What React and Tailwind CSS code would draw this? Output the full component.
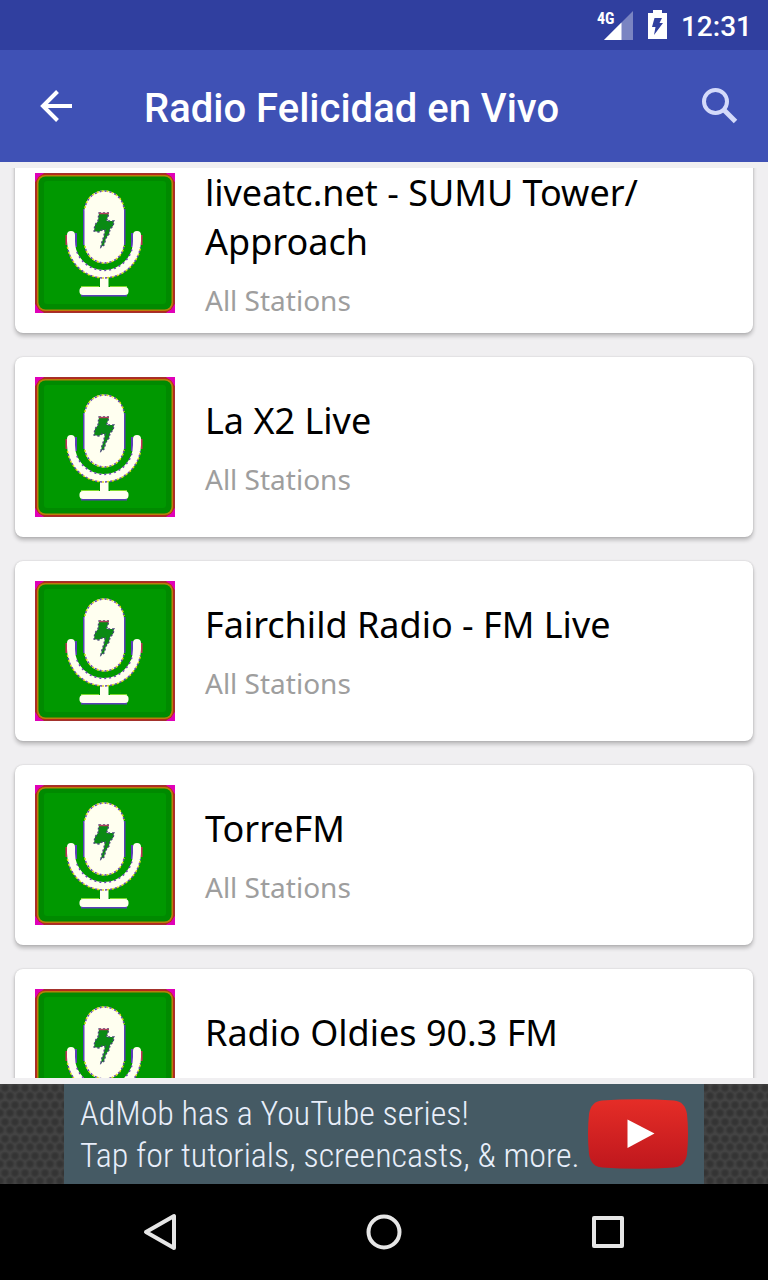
import React from "react";

const stations = [
  { id: 1, name: ["liveatc.net - SUMU Tower/", "Approach"], category: "All Stations" },
  { id: 2, name: ["La X2 Live"], category: "All Stations" },
  { id: 3, name: ["Fairchild Radio - FM Live"], category: "All Stations" },
  { id: 4, name: ["TorreFM"], category: "All Stations" },
  { id: 5, name: ["Radio Oldies 90.3 FM"], category: "" },
];

const MicLogo = () => (
  <svg viewBox="0 0 140 140" className="size-35 shrink-0" aria-hidden="true">
    <rect width="140" height="140" fill="#a3322c" />
    {/* corners */}
    <path
      d="M0 0h9L0 9zM140 0v9l-9-9zM0 140v-9l9 9zM140 140h-9l9-9z"
      fill="#e000b8"
    />
    <rect x="1" y="1" width="138" height="138" rx="9" fill="#b8281c" />
    <rect x="2" y="2" width="136" height="136" rx="8" fill="#b5800a" />
    <rect x="3.500" y="3.500" width="133" height="133" rx="7" fill="#008a00" />
    <rect x="9" y="8" width="122" height="123" rx="3" fill="#009800" />

    {/* colour fringe */}
    <g fill="none" stroke="#5a3fb8" strokeWidth="2">
      <path d="M49 36v36M89.500 36v36M41 60v14M97 60v14M46 122.500h46" />
    </g>
    <path d="M31.500 62v10M106.500 62v10" stroke="#c2305a" strokeWidth="2" />
    <path d="M46 114h18M75 114h17" stroke="#a8f03c" strokeWidth="1.500" />

    <rect x="49.500" y="17.500" width="39.500" height="73" rx="19.700" fill="#fffff0" />
    <path
      d="M36 62v6a33 33 0 0 0 66 0v-6"
      fill="none"
      stroke="#fffff0"
      strokeWidth="8"
      strokeLinecap="round"
    />
    <path d="M65 100h8.500v16H65z" fill="#fffff0" />
    <rect x="44.500" y="114" width="49" height="8" rx="3.500" fill="#fffff0" />

    {/* stepped edges */}
    <g fill="none" strokeWidth="1.500" strokeDasharray="2 3">
      <g stroke="#e0d820">
        <path d="M50 35a19.700 19.700 0 0 1 39 0M50 73a19.700 19.700 0 0 0 39 0" />
        <path d="M32.500 74a37 37 0 0 0 73 0" />
      </g>
      <g stroke="#6a4bb0" strokeDashoffset="2">
        <path d="M50 35a19.700 19.700 0 0 1 39 0M50 73a19.700 19.700 0 0 0 39 0" />
        <path d="M32.500 74a37 37 0 0 0 73 0" />
        <path d="M41 76a29 29 0 0 0 56 0" />
      </g>
    </g>
    <path
      d="M64 40h10l-2.500 8H79l-1 5-3 3-1 5-3 4-2 7-3 2 1-5 2-6 1-6h-3l-3 2-5-1 1-6 3-4z"
      fill="#0a8a14"
      stroke="#4a4a78"
      strokeWidth="1.500"
      strokeDasharray="2 2"
    />
    <path d="M64 40.500h10" stroke="#b04060" strokeWidth="1.500" />
  </svg>
);

const StatusBar = () => (
  <div className="flex h-[50px] shrink-0 items-center justify-end gap-3.5 bg-[#303f9f] pr-4 text-white">
    <svg viewBox="0 0 37 32" className="h-8 w-[37px]" aria-hidden="true">
      <path d="M36 2v29H7z" fill="#7a84c2" />
      <path d="M24.500 13.500V31H7z" fill="#fff" />
      <text
        x="0"
        y="15"
        fill="#fff"
        className="font-['Roboto_Condensed',Roboto,sans-serif] text-[16px] font-bold"
      >
        4G
      </text>
    </svg>
    <svg viewBox="0 0 19 30" className="h-[30px] w-[19px]" aria-hidden="true">
      <path d="M5 0h9v3h5v26H0V3h5z" fill="#fff" />
      <path d="M6.500 8H14l-2.500 5H15L6 25l1.500-8H4z" fill="#303f9f" />
    </svg>
    <span className="pt-1 font-[Roboto,sans-serif] text-[28px] leading-8 font-medium">
      12:31
    </span>
  </div>
);

const Toolbar = () => (
  <header className="flex h-28 shrink-0 items-center bg-[#3f51b5] px-7 text-white">
    <button type="button" aria-label="Back" className="flex size-14 items-center justify-center">
      <svg viewBox="0 0 32 32" className="size-8" fill="none" stroke="#fff" strokeWidth="4">
        <path d="M32 16H3M17.500 1.500 3 16l14.500 14.500" />
      </svg>
    </button>
    <h1 className="ml-15 flex-1 pt-1.5 font-[Roboto,sans-serif] text-[40px] leading-12 font-medium">
      Radio Felicidad en Vivo
    </h1>
    <button type="button" aria-label="Search" className="flex size-10 items-center justify-center">
      <svg viewBox="0 0 36 36" className="size-9" fill="none" stroke="#d4dafa" strokeWidth="4">
        <circle cx="13.500" cy="13.500" r="11.500" />
        <path d="m21.500 21.500 12 12" strokeWidth="5" />
      </svg>
    </button>
  </header>
);

const StationCard = ({ station }) => (
  <li className="flex h-45 shrink-0 items-center gap-[30px] rounded-lg bg-white p-5 shadow-[0_3px_4px_rgba(0,0,0,0.24),0_0_2px_rgba(0,0,0,0.16)]">
    <MicLogo />
    <div className="flex min-w-0 flex-1 flex-col gap-[15px]">
      <h2 className="text-[36px] leading-[49px] text-black">
        {station.name.map((part) => (
          <React.Fragment key={part}>
            {part}
            <wbr />
          </React.Fragment>
        ))}
      </h2>
      <p className="min-h-[38px] text-[28px] leading-[38px] text-[#9e9e9e]">
        {station.category}
      </p>
    </div>
  </li>
);

const AdBanner = () => (
  <div className="flex h-25 shrink-0 justify-center bg-[#434343] bg-[radial-gradient(circle_at_5px_4px,#343434_2px,transparent_5px),radial-gradient(circle_at_0px_12px,#343434_2px,transparent_5px),radial-gradient(circle_at_10px_12px,#343434_2px,transparent_5px)] bg-size-[10px_17px]">
    <a
      href="#"
      className="flex w-full max-w-160 items-center justify-between bg-[#455a64] pr-4 pl-4 font-['Roboto_Condensed',Roboto,sans-serif] text-[34px] leading-[42px] font-light text-[#e8eefa]"
    >
      <span className="whitespace-nowrap">
        AdMob has a YouTube series!
        <br />
        Tap for tutorials, screencasts, &amp; more.
      </span>
      <svg viewBox="0 0 100 70" className="h-[70px] w-25 shrink-0" aria-hidden="true">
        <defs>
          <linearGradient id="play" x1="0" y1="0" x2="0" y2="1">
            <stop offset="0" stopColor="#e52d27" />
            <stop offset="1" stopColor="#bf171d" />
          </linearGradient>
        </defs>
        <path
          d="M14 1.500Q50-1 86 1.500 97 2.500 99 15q2 20 0 40-2 12.500-13 13.500-36 2.500-72 0Q3 67.500 1 55q-2-20 0-40Q3 2.500 14 1.500z"
          fill="url(#play)"
        />
        <path d="M39.500 20.500 66.500 34.500 39.500 49z" fill="#fff" />
      </svg>
    </a>
  </div>
);

const NavBar = () => (
  <nav className="flex h-24 shrink-0 items-center bg-black px-12">
    <button type="button" aria-label="Back" className="flex flex-1 justify-center">
      <svg viewBox="0 0 40 40" className="size-10" fill="none" stroke="#e6e6e6" strokeWidth="4" strokeLinejoin="round">
        <path d="M34 4v32L6 20z" />
      </svg>
    </button>
    <button type="button" aria-label="Home" className="flex flex-1 justify-center">
      <svg viewBox="0 0 40 40" className="size-10" fill="none" stroke="#e6e6e6" strokeWidth="4">
        <circle cx="20" cy="20" r="15.500" />
      </svg>
    </button>
    <button type="button" aria-label="Recent apps" className="flex flex-1 justify-center">
      <svg viewBox="0 0 40 40" className="size-10" fill="none" stroke="#e6e6e6" strokeWidth="4" strokeLinejoin="round">
        <path d="M6 6h28v28H6z" />
      </svg>
    </button>
  </nav>
);

const App = () => {
  return (
    <div className="flex h-screen flex-col bg-[#f0eff1] font-['Noto_Sans',sans-serif]">
      <StatusBar />
      <Toolbar />
      <main className="my-1.5 min-h-0 flex-1 overflow-hidden">
        {/* the list is scrolled a little past its first card's top edge */}
        <ul className="-mt-[15px] flex flex-col gap-6 px-[15px]">
          {stations.map((station) => (
            <StationCard key={station.id} station={station} />
          ))}
        </ul>
      </main>
      <AdBanner />
      <NavBar />
    </div>
  );
};

export default App;
